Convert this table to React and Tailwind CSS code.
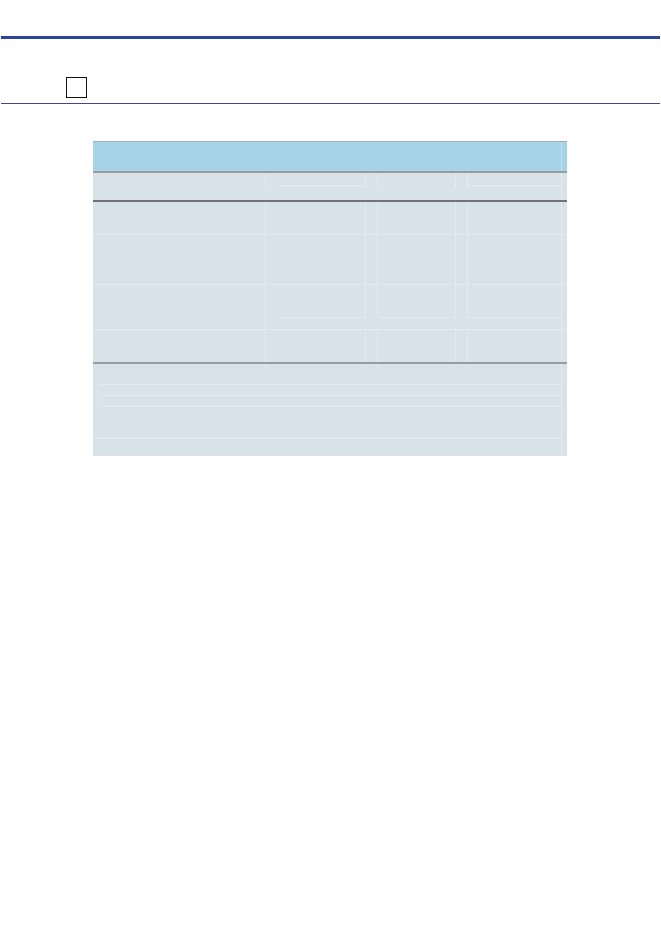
const cols = "grid grid-cols-[172px_100px_12px_78px_12px_94px_6px]";
const ln = "border-[#e5ecf1]";

// one row of faint cells
function Row({ h, bottom }) {
  return (
    <div className={`${cols} ${bottom ? `border-b ${ln}` : ""}`} style={{ height: h }}>
      <div />
      <div className={`border-l ${ln}`} />
      <div className={`border-l ${ln}`} />
      <div className={`border-l ${ln}`} />
      <div className={`border-l ${ln}`} />
      <div className={`border-l ${ln}`} />
      <div className={`border-l ${ln}`} />
    </div>
  );
}

export default function App() {
  return (
    <div className="w-[661px] h-[933px] bg-white pt-[36px]">
      {/* top rule */}
      <div className="mx-[1px] h-[3px] bg-[#2b449d]" />

      {/* section marker */}
      <div className="mt-[38px] pl-[66px] h-[21px]">
        <div className="w-[21px] h-[21px] border border-[#111]" />
      </div>
      <div className="mt-[5px] mx-[1px] h-[1px] bg-[#3d4c86]" />

      {/* table */}
      <div className="mt-[37px] ml-[93px] w-[474px] bg-[#d8e2e9]">
        {/* header */}
        <div className="border-t border-[#a9acae] h-[30px] bg-[#a6d3e8] flex">
          <div className="w-[468px]" />
          <div className="flex-1 border-l border-[#bfe0ee]" />
        </div>
        <div className="h-[2px] bg-[#9a9da0]" />

        {/* group row */}
        <div className={`${cols} h-[27px]`}>
          <div />
          <div className={`border-l ${ln} h-[15px] pl-[12px]`}>
            <div className={`h-[13px] border-b ${ln}`} />
          </div>
          <div className={`border-l ${ln} h-[15px]`} />
          <div className={`border-l ${ln} h-[15px]`} />
          <div className={`border-l ${ln} h-[15px]`} />
          <div className={`border-l ${ln} h-[15px]`}>
            <div className={`h-[13px] border-b ${ln}`} />
          </div>
          <div className={`border-l ${ln}`} />
        </div>
        <div className="h-[2px] bg-[#727578]" />

        {/* body */}
        <Row h={33} bottom />
        <Row h={50} bottom />
        <div className={`${cols} h-[45px] border-b ${ln}`}>
          <div />
          <div className={`border-l ${ln} pl-[12px]`}>
            <div className={`h-[33px] border-b ${ln}`} />
          </div>
          <div className={`border-l ${ln} h-[33px]`} />
          <div className={`border-l ${ln} h-[33px] border-b`} />
          <div className={`border-l ${ln} h-[33px]`} />
          <div className={`border-l ${ln} h-[33px] border-b`} />
          <div className={`border-l ${ln}`} />
        </div>
        <Row h={32} />
        <div className="h-[2px] bg-[#9a9da0]" />

        {/* notes */}
        <div className="flex">
          <div className="w-[468px]">
            <div className="h-[20px]" />
            <div className="pl-[7px]">
              <div className={`h-[11px] border-t ${ln}`} />
              <div className={`h-[11px] border-t ${ln}`} />
              <div className={`h-[32px] border-t ${ln}`} />
            </div>
            <div className={`h-[18px] border-t ${ln}`} />
          </div>
          <div className={`flex-1 border-l ${ln}`} />
        </div>
      </div>
    </div>
  );
}
